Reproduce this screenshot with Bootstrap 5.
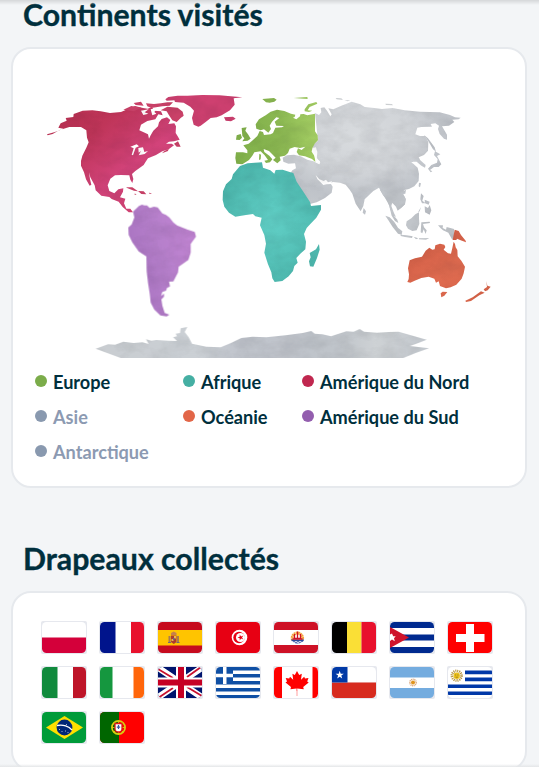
<!DOCTYPE html>
<html lang="fr">
<head>
<meta charset="utf-8">
<meta name="viewport" content="width=device-width, initial-scale=1">
<title>Continents visités</title>
<link href="https://cdn.jsdelivr.net/npm/bootstrap@5.3.0/dist/css/bootstrap.min.css" rel="stylesheet">
<style>
html,body{height:767px;overflow:hidden}
body{background:#f3f5f7;color:#002f3d;font-family:Lato,"Open Sans",sans-serif}
.page{height:767px;padding:0 12px 0 11px;overflow:hidden;position:relative}
.edge-top,.edge-bottom{position:absolute;left:0;right:0;height:5px}
.edge-top{top:0;background:linear-gradient(#d5d7d9,#f3f5f700)}
.edge-bottom{bottom:0;height:3px;background:linear-gradient(#e9ebed00,#e4e6e8)}
.title{font-size:30.250px;line-height:28px;font-weight:700;-webkit-text-stroke:.35px #002f3d;padding-left:12px;margin:0;flex-shrink:0}
.panel{border:2px solid #e6e9ed;border-radius:20px;background:#fff;width:516px;flex-shrink:0}
.map-panel{height:441px;margin-top:19px}
.map{display:block;width:465px;height:280px;margin:36px 0 0 22px}
.flag-panel{height:180px;padding:28px 26px 28px 28px;margin-top:19px}
.second{margin-top:56px}
.legend{display:grid;grid-template-columns:148px 119px 1fr;grid-auto-rows:35px;padding-left:22px;margin-top:-1px;font-size:18.15px;font-weight:700;line-height:35px;white-space:nowrap}
.legend span{padding-top:1px}
.dot{width:12px;height:12px;border-radius:50%;margin-right:6px;margin-top:-1px}
.off{color:#8c9ab2}
.flag{width:46px;height:33px;padding:1px;background:#e6e8ee;border-radius:2px}
.flag svg{display:block;width:44px;height:31px;border-radius:4.5px}
.flags{gap:12px}
</style>
</head>
<body>
<main class="page d-flex flex-column">
<h2 class="title">Continents visités</h2>
<section class="panel map-panel">
<svg class="map" viewBox="35 85 465 280" aria-label="Carte des continents">
<defs>
<linearGradient id="na" x1="0" y1="0" x2="1" y2="1"><stop offset="0" stop-color="#b72f50"/><stop offset=".3" stop-color="#bf3559"/><stop offset=".6" stop-color="#d2437a"/><stop offset="1" stop-color="#cb4069"/></linearGradient>
<linearGradient id="eu"><stop offset="0" stop-color="#80b04a"/><stop offset=".5" stop-color="#8ab751"/><stop offset="1" stop-color="#a5cf64"/></linearGradient>
<radialGradient id="af" cx=".5" cy=".5" r=".6"><stop offset="0" stop-color="#61cfc6"/><stop offset="1" stop-color="#4bb6ac"/></radialGradient>
<linearGradient id="sa" x1="0" y1=".6" x2="1" y2=".2"><stop offset="0" stop-color="#a873c0"/><stop offset=".5" stop-color="#b780cc"/><stop offset="1" stop-color="#c285d3"/></linearGradient>
<radialGradient id="as" cx=".42" cy=".3" r=".62"><stop offset="0" stop-color="#d8dbde"/><stop offset=".5" stop-color="#d1d4d8"/><stop offset=".85" stop-color="#bfc3c9"/><stop offset="1" stop-color="#c3c7cc"/></radialGradient>
<linearGradient id="an"><stop offset="0" stop-color="#c9cdd1"/><stop offset=".32" stop-color="#cbd0d5"/><stop offset=".42" stop-color="#c1c5cd"/><stop offset=".72" stop-color="#bfc4ca"/><stop offset=".84" stop-color="#ced2d5"/><stop offset="1" stop-color="#c3c8ce"/></linearGradient>
<linearGradient id="oc" x1="0" x2="1" y1="0" y2="1"><stop offset="0" stop-color="#d25e46"/><stop offset=".5" stop-color="#df6b50"/><stop offset="1" stop-color="#d36146"/></linearGradient>
<filter id="paper" x="0" y="0" width="1" height="1" color-interpolation-filters="sRGB"><feTurbulence type="fractalNoise" baseFrequency=".05 .08" numOctaves="5" seed="4" result="n"/><feColorMatrix in="n" type="matrix" values="0 0 0 0 0  0 0 0 0 0  0 0 0 0 .04  .13 0 0 0 -.045"/><feComposite in2="SourceAlpha" operator="in" result="t"/><feMerge><feMergeNode in="SourceGraphic"/><feMergeNode in="t"/></feMerge></filter>
</defs>
<g filter="url(#paper)">
<!-- Asie -->
<g transform="translate(310 85) scale(.33333)">
<path fill="url(#as)" d="M15 84L27 90 34 82 32 69 43 67 52 79 61 94 65 88 55 70 70 73 94 62 125 50 151 58 164 66 193 69 216 72 248 69 284 76 330 80 389 82 420 90 435 97 452 98 446 103 427 104 433 111 417 122 396 124 411 149 411 164 402 161 389 147 384 132 387 122 376 115 362 117 366 125 334 126 322 128 316 148 330 153 345 153 355 170 354 197 342 210 326 217 331 226 347 240 345 248 334 242 320 230 310 230 299 234 293 225 300 218 293 226 310 236 323 248 327 266 326 288 313 304 297 312 283 315 278 324 288 343 285 358 273 369 265 374 260 363 247 352 244 363 252 384 258 396 248 390 240 370 232 346 219 331 207 308 190 318 164 343 160 363 152 379 137 356 127 326 119 314 107 299 90 293 69 291 61 294 68 305 65 323 45 339 20 352 0 357-7 362-8 352-27 329-42 305-48 283-60 267-53 256-42 250-45 235-65 236-80 230-82 218-69 211-48 209-28 214-8 224 10 229 28 238 30 229 20 222 19 208 22 200 14 190 8 190 9 179 24 167Z"/>
<path fill="#fff" d="M17 270L28 283 41 288 48 284 54 292 66 289 63 297 49 298 40 300 31 291 22 282ZM4 190L18 187 22 203 20 218 31 232 28 237 17 231 8 211Z"/>
<path fill="#bfc3c9" d="M342 150L354 160 374 187 378 200 369 193 356 170ZM375 199L391 208 381 213 394 238 386 246 372 246 360 255 367 259 362 262 354 251 364 240 381 233 383 222 372 210ZM161 369L168 379 165 389 158 383ZM276 320L288 314 286 326 278 327ZM327 293L333 295 330 307 326 304ZM333 325L341 333 337 347 346 354 336 355 331 343ZM344 344L359 350 356 359 345 355ZM324 382L333 366 329 379ZM344 364L354 369 359 360 364 376 359 389 345 382Z"/>
<path fill="#d1d4d7" d="M77 39L94 40 99 45 80 43ZM103 45L121 46 113 49ZM226 56L246 57 249 61 228 60Z"/>
</g>
<g transform="translate(380 190) scale(.33333)">
<path fill="#c1c5ca" d="M0 0L20 0 28 40 30 53 38 62 43 79 52 89 55 99 45 93 35 77 27 45 14 22ZM22 0L62 0 76 25 75 43 63 54 53 62 48 50 38 40 30 40ZM16 77L29 82 43 96 54 113 67 124 65 134 54 131 38 111 25 91ZM62 134L80 136 98 139 96 144 75 141 62 138ZM101 140L115 145 108 148ZM117 145L148 144 138 149 117 148ZM80 94L94 85 106 73 117 67 117 85 118 102 110 121 97 123 84 116 78 106ZM124 97L149 95 150 99 129 102 132 112 140 121 137 132 131 118 127 130 122 127ZM174 106L189 106 188 114 198 119 200 111 222 117 224 149 216 148 205 128 189 121 182 115Z"/>
<path fill="#d7634a" d="M224 119L236 123 243 135 257 152 258 157 242 151 231 146 229 150 218 150Z"/>
<path fill="url(#oc)" d="M221 155L225 162 227 172 232 180 233 199 244 212 255 230 251 250 245 266 229 284 212 292 198 295 180 288 176 274 168 278 163 266 146 260 124 264 104 272 91 278 82 276 86 267 87 253 84 235 89 211 105 205 126 200 137 182 148 173 157 179 164 178 166 166 180 161 193 164 196 171 191 179 204 190 213 191 217 174ZM188 305L202 306 193 317 184 322 182 310ZM319 273L322 287 332 290 323 301 315 304 311 298 321 291ZM256 332L278 322 303 304 314 308 298 316 273 333 258 336Z"/>
</g>
<!-- Europe -->
<g transform="translate(180 85) scale(.33333)">
<path fill="url(#eu)" d="M202 205L202 196 190 181 206 176 219 165 232 153 239 138 249 141 252 150 272 148 279 144 286 128 306 127 312 123 289 122 284 110 298 99 289 97 276 110 269 122 273 132 265 143 252 133 242 136 229 131 227 118 237 103 257 91 272 80 291 74 313 78 333 86 346 89 344 96 339 98 349 103 360 94 361 88 371 87 382 91 405 86 405 139 413 151 414 166 404 176 397 190 395 200 402 211 405 222 406 231 396 222 375 214 357 211 350 201 354 190 365 195 376 185 360 189 344 186 329 191 324 204 315 212 299 215 302 226 292 235 279 225 287 218 276 207 267 198 251 192 253 201 268 212 277 223 270 232 258 234 253 227 264 225 254 211 242 199 223 202 217 212 207 225 187 238 169 236 166 219 168 202 189 202ZM186 141L185 129 200 127 196 137 205 149 212 161 203 167 187 169 193 160 187 153ZM170 151L182 147 186 158 179 165 168 164ZM247 42L282 39 290 44 283 50 269 53 258 52ZM341 39L382 36 383 42ZM374 73L385 58 409 51 412 56 389 66 383 76 397 77 387 81 374 79ZM238 206L243 209 242 223 237 225Z"/>
<path fill="#ce4070" d="M-44 43L-35 36-7 32 22 32 67 30 118 31 187 37 161 40 164 59 150 76 125 91 110 97 92 99 77 111 62 122 55 125 41 119 36 99 42 77 31 65 11 53-15 51-17 46-40 47ZM132 97L159 95 167 101 153 109 137 107ZM2 88L8 94-1 97Z"/>
</g>
<!-- Amérique du Nord -->
<g transform="translate(40 85) scale(.33333)">
<path fill="url(#na)" d="M21 148L45 141 70 131 55 128 62 115 80 107 77 99 100 96 101 87 128 77 157 76 182 79 210 84 243 81 264 72 285 63 309 69 323 71 336 66 342 77 363 79 368 91 355 88 346 103 322 108 303 119 298 136 324 148 327 161 332 151 340 137 354 124 357 112 365 102 381 97 391 105 385 117 403 115 408 124 407 144 414 155 419 164 402 169 387 170 378 176 395 176 402 181 386 193 367 199 348 210 324 220 316 232 311 240 286 258 276 267 280 282 277 294 271 284 268 271 243 270 225 271 211 281 203 301 208 318 223 325 235 313 250 310 249 320 240 337 256 341 252 355 259 371 271 371 279 382 266 382 248 366 236 350 215 342 208 336 184 332 167 316 164 301 151 277 147 262 150 282 154 299 149 302 138 283 132 262 123 242 123 228 127 212 139 188 146 172 141 158 139 136 123 126 88 126 57 136 38 147 23 151Z"/>
<path fill="#c94168" d="M250 74L274 63 304 68 282 79ZM281 54L303 50 311 62 287 60ZM318 55L342 57 363 55 382 52 399 52 389 62 367 64 334 69 322 64ZM362 76L382 65 413 68 428 80 431 92 422 99 410 111 397 106 387 91 380 79ZM372 199L386 191 384 198 366 205ZM402 176L414 169 422 185 410 185ZM258 307L277 307 294 319 282 317 263 310ZM294 318L311 319 319 328 304 327ZM283 326L290 327 285 330ZM327 323L336 325 329 327Z"/>
<path fill="#fff" d="M271 185L290 178 297 184 287 188 279 211 275 209 281 190ZM295 189L309 187 313 201 324 198 314 207 296 211 303 198 296 203ZM303 77L326 73 314 82 325 86 310 90ZM332 73L352 69 343 81 349 86 337 91Z"/>
</g>
<!-- Amérique du Sud -->
<path transform="translate(110 190) scale(.33333)" fill="url(#sa)" d="M72 62L87 48 96 44 103 46 111 46 119 54 132 50 143 52 157 70 168 75 178 82 190 97 201 106 231 118 254 126 258 140 242 162 242 188 235 210 218 222 206 230 204 247 190 274 177 275 180 289 171 294 168 302 157 306 153 318 162 311 162 320 154 328 157 347 164 369 178 374 170 379 151 376 133 359 122 338 119 311 114 279 110 244 109 199 86 184 67 157 56 135 55 112 65 103 73 82 69 65Z"/>
<!-- Afrique -->
<path transform="translate(210 155) scale(.33333)" fill="url(#af)" d="M90 33L113 25 156 22 159 38 181 46 193 56 197 45 218 44 239 51 250 54 260 80 281 112 300 141 303 153 333 150 333 164 319 188 301 207 290 219 282 237 288 260 286 283 271 296 259 309 263 323 253 333 249 348 236 364 217 378 194 381 187 370 184 352 174 328 163 293 168 266 163 240 150 211 155 188 136 184 129 177 108 180 76 185 57 173 43 155 38 135 39 109 48 88 65 72 69 58ZM299 294L318 283 327 267 329 284 321 309 310 335 300 334 297 319 302 307Z"/>
<!-- Antarctique -->
<path transform="translate(85 320) scale(.33333)" fill="url(#an)" d="M32 86L69 73 90 74 115 65 146 69 172 67 191 72 183 58 199 62 214 60 248 62 276 63 264 52 276 49 272 41 285 39 287 25 307 21 299 36 311 52 321 71 364 80 407 82 438 69 469 54 502 50 544 52 602 46 653 39 679 33 689 41 712 43 738 49 784 34 806 35 824 27 837 35 876 38 911 36 941 35 1025 59 998 70 975 78 1032 85 992 99 955 114 107 114Z"/>
</g>
</svg>
<div class="legend">
<div class="d-flex align-items-center"><i class="dot" style="background:#7bac4a"></i><span>Europe</span></div>
<div class="d-flex align-items-center"><i class="dot" style="background:#45afa3"></i><span>Afrique</span></div>
<div class="d-flex align-items-center"><i class="dot" style="background:#c0274f"></i><span>Amérique du Nord</span></div>
<div class="d-flex align-items-center off"><i class="dot" style="background:#8999af"></i><span>Asie</span></div>
<div class="d-flex align-items-center"><i class="dot" style="background:#e26648"></i><span>Océanie</span></div>
<div class="d-flex align-items-center"><i class="dot" style="background:#935eae"></i><span>Amérique du Sud</span></div>
<div class="d-flex align-items-center off"><i class="dot" style="background:#8999af"></i><span>Antarctique</span></div>
</div>
</section>
<h2 class="title second">Drapeaux collectés</h2>
<section class="panel flag-panel">
<div class="flags d-flex flex-wrap">
<div class="flag"><svg viewBox="0 0 44 31"><path fill="#fff" d="M0 0h44v31H0z"/><path fill="#d4003a" d="M0 15.500h44V31H0z"/></svg></div>
<div class="flag"><svg viewBox="0 0 44 31"><path fill="#fff" d="M0 0h44v31H0z"/><path fill="#00148c" d="M0 0h15.500v31H0z"/><path fill="#e8112d" d="M31 0h13v31H31z"/></svg></div>
<div class="flag"><svg viewBox="0 0 44 31"><path fill="#c60b1e" d="M0 0h44v31H0z"/><path fill="#ffc400" d="M0 8h44v15.500H0z"/><path fill="#a97a52" d="M10.500 14h2v7h-2zM19 14h2v7h-2z"/><path fill="#ad3a30" d="M13 13.500h5.500v6.500l-2.700 2-2.800-2z"/><path fill="#c6814b" d="M13 11l2.700-1.500L18.500 11v2H13z"/><path fill="#e8b94a" d="M16 14h2v2.500h-2zM13.500 17h2v2h-2z"/><path fill="#6b6580" d="M15 16h1.500v2H15zM10 20h3v1h-3zM18.500 20h3v1h-3z"/></svg></div>
<div class="flag"><svg viewBox="0 0 44 31"><path fill="#e70013" d="M0 0h44v31H0z"/><circle cx="23.500" cy="15.500" r="7.800" fill="#fff"/><circle cx="23" cy="15.500" r="5.700" fill="#e70013"/><circle cx="24.500" cy="15.500" r="4.500" fill="#fff"/><path fill="#e70013" d="M21.500 15.500l2.200-.7V12.500l1.400 1.900 2.300-.8-1.400 1.900 1.400 1.900-2.300-.8-1.400 1.900v-2.300z"/></svg></div>
<div class="flag"><svg viewBox="0 0 44 31"><path fill="#ce1126" d="M0 0h44v31H0z"/><path fill="#fff" d="M0 8h44v15H0z"/><path fill="#fff" stroke="#f5a13b" stroke-width="3" stroke-dasharray="1.700 .4" d="M18.500 18a5.200 5.200 0 1 1 9.800 0"/><path fill="#2c4ca0" d="M17 17.500h13c-1 5-11.500 5.500-13 0"/><path stroke="#fff" fill="none" d="M18 19.500l2 1 2-1 2 1 2-1 2 1"/><path stroke="#ce1126" stroke-width="1.300" fill="none" d="M20.500 12v4.500h6V12M23.500 9.500v7M18.500 17h10"/></svg></div>
<div class="flag"><svg viewBox="0 0 44 31"><path fill="#000" d="M0 0h15v31H0z"/><path fill="#fadf36" d="M15 0h14.500v31H15z"/><path fill="#e8112d" d="M29.500 0H44v31H29.500z"/></svg></div>
<div class="flag"><svg viewBox="0 0 44 31"><path fill="#fff" d="M0 0h44v31H0z"/><path fill="#002a8f" d="M0 0h44v6H0zM0 12.500h44v6H0zM0 25h44v6H0z"/><path fill="#cf142b" d="M0 5l19 10.500L0 26z"/><path fill="#fff" d="M0 12.500l2-1 1.200 2.700h2.500L4 16.300l.8 3-2.800-1.700-2 1.500z"/></svg></div>
<div class="flag"><svg viewBox="0 0 44 31"><path fill="#f00" d="M0 0h44v31H0z"/><path fill="#fff" d="M18 2h8v10h10.500v8H26v10h-8V20H8v-8h10z"/></svg></div>
<div class="flag"><svg viewBox="0 0 44 31"><path fill="#fff" d="M0 0h44v31H0z"/><path fill="#108a3d" d="M0 0h15.500v31H0z"/><path fill="#be1529" d="M31 0h13v31H31z"/></svg></div>
<div class="flag"><svg viewBox="0 0 44 31"><path fill="#fff" d="M0 0h44v31H0z"/><path fill="#15973f" d="M0 0h12.500v31H0z"/><path fill="#ff660b" d="M33.500 0H44v31H33.500z"/></svg></div>
<div class="flag"><svg viewBox="0 0 44 31"><path fill="#00156e" d="M0 0h44v31H0z"/><path stroke="#fff" stroke-width="6.500" d="M-1 0l46 31M45 0L-1 31"/><path stroke="#c8102e" stroke-width="1.800" d="M0 2l15 9M43 0L29 10M0 31l15-10M29 20l15 9"/><path fill="#fff" d="M18 0h10v31H18zM0 10.500h44v10H0z"/><path fill="#c60024" d="M20 0h6v31h-6zM0 12.500h44v6H0z"/></svg></div>
<div class="flag"><svg viewBox="0 0 44 31"><path fill="#fff" d="M0 0h44v31H0z"/><path fill="#0f4fa4" d="M0 0h44v3.500H0zM0 7h44v3.500H0zM0 14h44v3.500H0zM0 21h44v3.500H0zM0 28h44v3H0zM0 0h17v17H0z"/><path fill="#fff" d="M7 0h3.500v17H7zM0 6.800h17v3.500H0z"/></svg></div>
<div class="flag"><svg viewBox="0 0 44 31"><path fill="#fff" d="M0 0h44v31H0z"/><path fill="#f00" d="M0 0h8v31H0zM38.500 0H44v31h-5.500zM23 4l2.200 4 2.600-1.300-.8 6 3.200-3 .8 1.800 3.500-.6-1.300 3.600 1.500 1-5.500 4.500.6 2.200-6.600-.8v2.400h-.6v-2.400l-6.200.8.600-2.200-5.500-4.500 1.500-1-1.300-3.600 3.500.6.8-1.800 3.200 3-.8-6L20.800 8z"/><path fill="#f88" d="M22.600 23h.8v6h-.8z"/></svg></div>
<div class="flag"><svg viewBox="0 0 44 31"><path fill="#fff" d="M0 0h44v15.500H0z"/><path fill="#d72b1f" d="M0 15.500h44V31H0z"/><path fill="#0039a6" d="M0 0h15.500v15.500H0z"/><path fill="#fff" d="M7.700 3.800l1 2.900h3.100L9.300 8.500l.9 3-2.500-1.800-2.500 1.800.9-3-2.500-1.800h3.100z"/></svg></div>
<div class="flag"><svg viewBox="0 0 44 31"><path fill="#74acdf" d="M0 0h44v31H0z"/><path fill="#fff" d="M0 10.500h44v10.500H0z"/><circle cx="23" cy="15.500" r="3.200" fill="none" stroke="#dba77c" stroke-width="1.500" stroke-dasharray="1 .6"/><circle cx="23" cy="15.500" r="2" fill="#df941d"/></svg></div>
<div class="flag"><svg viewBox="0 0 44 31"><path fill="#fff" d="M0 0h44v31H0z"/><path fill="#0038a8" d="M17 3.500h27v3.800H17zM17 10.500h27v3.800H17zM0 17.500h44v3.500H0zM0 24.500h44V28H0z"/><circle cx="8.700" cy="8.700" r="4.800" fill="none" stroke="#b3913c" stroke-width="2.600" stroke-dasharray="1 .88"/><circle cx="8.700" cy="8.700" r="3.200" fill="#ecc21b"/><path stroke="#7b5711" stroke-width=".6" fill="none" d="M7 8h1.200M9.300 8h1.200M7.500 10.200h2.500"/></svg></div>
<div class="flag"><svg viewBox="0 0 44 31"><path fill="#009b3a" d="M0 0h44v31H0z"/><path fill="#fedf00" d="M4 15.500L22.500 4 41 15.500 22.500 27z"/><circle cx="22.500" cy="15.500" r="7.900" fill="#002776"/><path fill="none" stroke="#fff" stroke-width="1.300" d="M15 13.500c6-1.500 12 1 15 4.500"/><path fill="#9ab0d0" d="M17 17h1v1h-1zM19.500 19h1v1h-1zM23 18.500h1v1h-1zM25.500 20h1v1h-1zM24 12h1v1h-1z"/></svg></div>
<div class="flag"><svg viewBox="0 0 44 31"><path fill="#f00" d="M0 0h44v31H0z"/><path fill="#060" d="M0 0h19v31H0z"/><circle cx="18.500" cy="15.500" r="6.600" fill="none" stroke="#d8cf10" stroke-width="1.700"/><path stroke="#d8cf10" stroke-width=".9" fill="none" d="M12 15.500h13M14 11l9 9M23 11l-9 9M18.500 9v13"/><path fill="#fff" stroke="#e01818" stroke-width="1.300" d="M15 11.500h7V17c0 4-7 4-7 0z"/><path stroke="#3858a0" stroke-width="1.200" d="M18.500 13v1.500M18.500 15.500V17M16.800 15.200h3.400"/></svg></div>
</div>
</section>
<div class="edge-top"></div><div class="edge-bottom"></div>
</main>
<script src="https://cdn.jsdelivr.net/npm/bootstrap@5.3.0/dist/js/bootstrap.bundle.min.js"></script>
</body>
</html>
